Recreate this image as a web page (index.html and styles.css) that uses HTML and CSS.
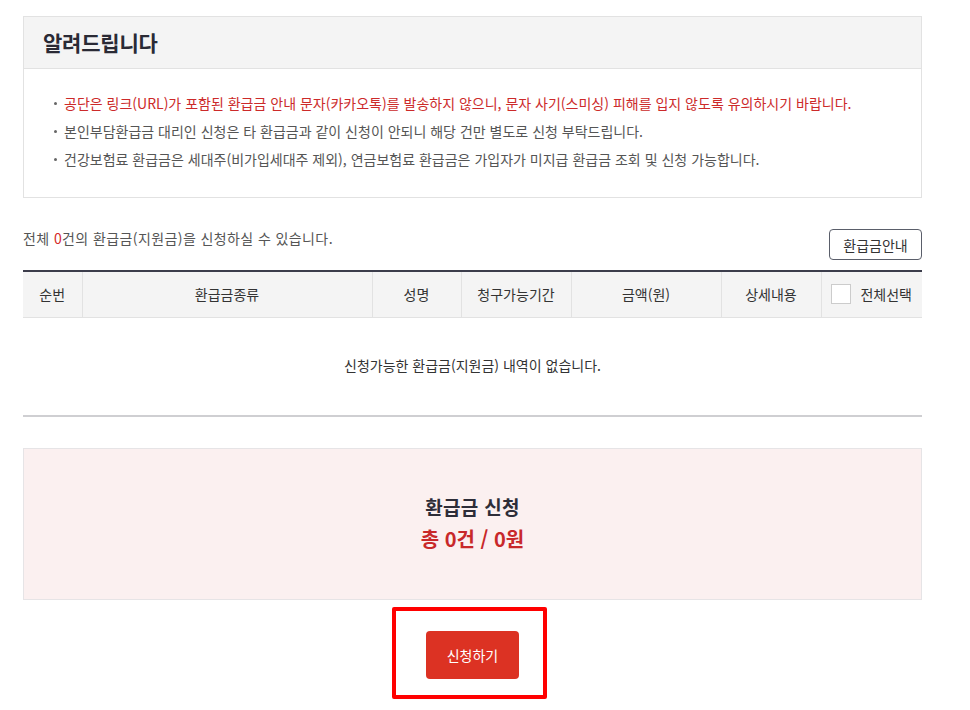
FILE: index.html
```html
<!DOCTYPE html>
<html lang="ko">
<head>
<meta charset="utf-8">
<title>환급금 신청</title>
<link rel="stylesheet" href="styles.css">
</head>
<body>
<div class="page">
  <section class="notice">
    <h2 class="notice-title">알려드립니다</h2>
    <ul class="notice-list">
      <li class="warn">공단은 링크(URL)가 포함된 환급금 안내 문자(카카오톡)를 발송하지 않으니, 문자 사기(스미싱) 피해를 입지 않도록 유의하시기 바랍니다.</li>
      <li>본인부담환급금 대리인 신청은 타 환급금과 같이 신청이 안되니 해당 건만 별도로 신청 부탁드립니다.</li>
      <li>건강보험료 환급금은 세대주(비가입세대주 제외), 연금보험료 환급금은 가입자가 미지급 환급금 조회 및 신청 가능합니다.</li>
    </ul>
  </section>

  <div class="list-top">
    <p class="count">전체 <em>0</em>건의 환급금(지원금)을 신청하실 수 있습니다.</p>
    <button class="btn-guide" type="button">환급금안내</button>
  </div>

  <table class="refund-table">
    <colgroup>
      <col class="c1"><col class="c2"><col class="c3"><col class="c4"><col class="c5"><col class="c6"><col class="c7">
    </colgroup>
    <thead>
      <tr>
        <th>순번</th>
        <th>환급금종류</th>
        <th>성명</th>
        <th>청구가능기간</th>
        <th>금액(원)</th>
        <th>상세내용</th>
        <th><label class="check-all"><span class="checkbox"></span>전체선택</label></th>
      </tr>
    </thead>
    <tbody>
      <tr><td colspan="7" class="empty">신청가능한 환급금(지원금) 내역이 없습니다.</td></tr>
    </tbody>
  </table>

  <section class="summary">
    <p class="summary-title">환급금 신청</p>
    <p class="summary-total">총 0건 / 0원</p>
  </section>

  <div class="actions">
    <div class="highlight">
      <button class="btn-apply" type="button">신청하기</button>
    </div>
  </div>
</div>
</body>
</html>
```

FILE: styles.css
```css
* { box-sizing: border-box; }
html, body { margin: 0; padding: 0; background: #fff; }
body {
  font-family: "Noto Sans CJK KR", "Noto Sans", sans-serif;
  color: #333;
  font-size: 14px;
}
.page {
  width: 899px;
  margin-left: 23px;
  padding-top: 16px;
}

/* notice */
.notice {
  border: 1px solid #e2e2e2;
}
.notice-title {
  margin: 0;
  height: 52px;
  line-height: 51px;
  padding-left: 19px;
  background: #f4f4f4;
  border-bottom: 1px solid #e2e2e2;
  font-size: 21px;
  font-weight: 700;
  color: #2a2a35;
  letter-spacing: -0.2px;
}
.notice-list {
  list-style: none;
  margin: 0;
  padding: 20px 0 24px 30px;
}
.notice-list li {
  position: relative;
  padding-left: 10px;
  line-height: 28px;
  font-size: 14px;
  color: #555;
  letter-spacing: 0;
}
.notice-list li::before {
  content: "";
  position: absolute;
  left: 0;
  top: 13px;
  width: 3px;
  height: 3px;
  border-radius: 50%;
  background: #666;
}
.notice-list li.warn { color: #cc2a2a; }

/* list top */
.list-top {
  display: flex;
  justify-content: space-between;
  align-items: flex-start;
  margin-top: 31px;
}
.count {
  margin: 0;
  line-height: 18px;
  font-size: 14px;
  color: #555;
  letter-spacing: 0.4px;
}
.count em { font-style: normal; color: #d42a2a; }
.btn-guide {
  width: 93px;
  height: 31px;
  border: 1px solid #5a5e6a;
  border-radius: 4px;
  background: #fff;
  font-family: inherit;
  font-size: 14px;
  color: #333;
  padding: 0;
}

/* table */
.refund-table {
  width: 100%;
  margin-top: 10px;
  border-collapse: collapse;
  table-layout: fixed;
}
.c1 { width: 59px; }
.c2 { width: 290px; }
.c3 { width: 89px; }
.c4 { width: 110px; }
.c5 { width: 150px; }
.c6 { width: 100px; }
.c7 { width: 101px; }
.refund-table thead th {
  height: 46px;
  border-top: 2px solid #3c3d4b;
  border-bottom: 1px solid #e2e2e2;
  border-left: 1px solid #e2e2e2;
  background: #f4f4f4;
  font-weight: 400;
  font-size: 14px;
  color: #333;
  padding: 0;
  letter-spacing: 0;
}
.refund-table thead th:first-child { border-left: none; }
.check-all {
  display: flex;
  align-items: center;
  justify-content: center;
  gap: 9px;
}
.checkbox {
  width: 20px;
  height: 20px;
  border: 1px solid #ccc;
  background: #fff;
}
.refund-table .empty {
  height: 99px;
  text-align: center;
  border-bottom: 2px solid #cfcfd2;
  font-size: 14px;
  color: #333;
  letter-spacing: 0;
  padding: 0 0 2px;
}

/* summary */
.summary {
  margin-top: 31px;
  height: 152px;
  border: 1px solid #e6e4e6;
  background: #fbf0f0;
  display: flex;
  flex-direction: column;
  align-items: center;
  justify-content: center;
  padding-bottom: 2px;
}
.summary p { margin: 0; }
.summary-title {
  font-size: 19px;
  font-weight: 700;
  color: #2d2d38;
  line-height: 32px;
  letter-spacing: 0.3px;
}
.summary-total {
  font-size: 20px;
  font-weight: 700;
  color: #c8282a;
  line-height: 32px;
}

/* actions */
.actions {
  display: flex;
  justify-content: center;
  margin-top: 7px;
}
.highlight {
  border: 4px solid #ff0000;
  border-radius: 2px;
  padding: 20px 24px 16px 30px;
  margin-right: 6px;
}
.btn-apply {
  display: block;
  width: 93px;
  height: 48px;
  border: none;
  border-radius: 4px;
  background: #dc3223;
  color: #fff;
  font-family: inherit;
  font-size: 14px;
  padding: 0;
}
```
